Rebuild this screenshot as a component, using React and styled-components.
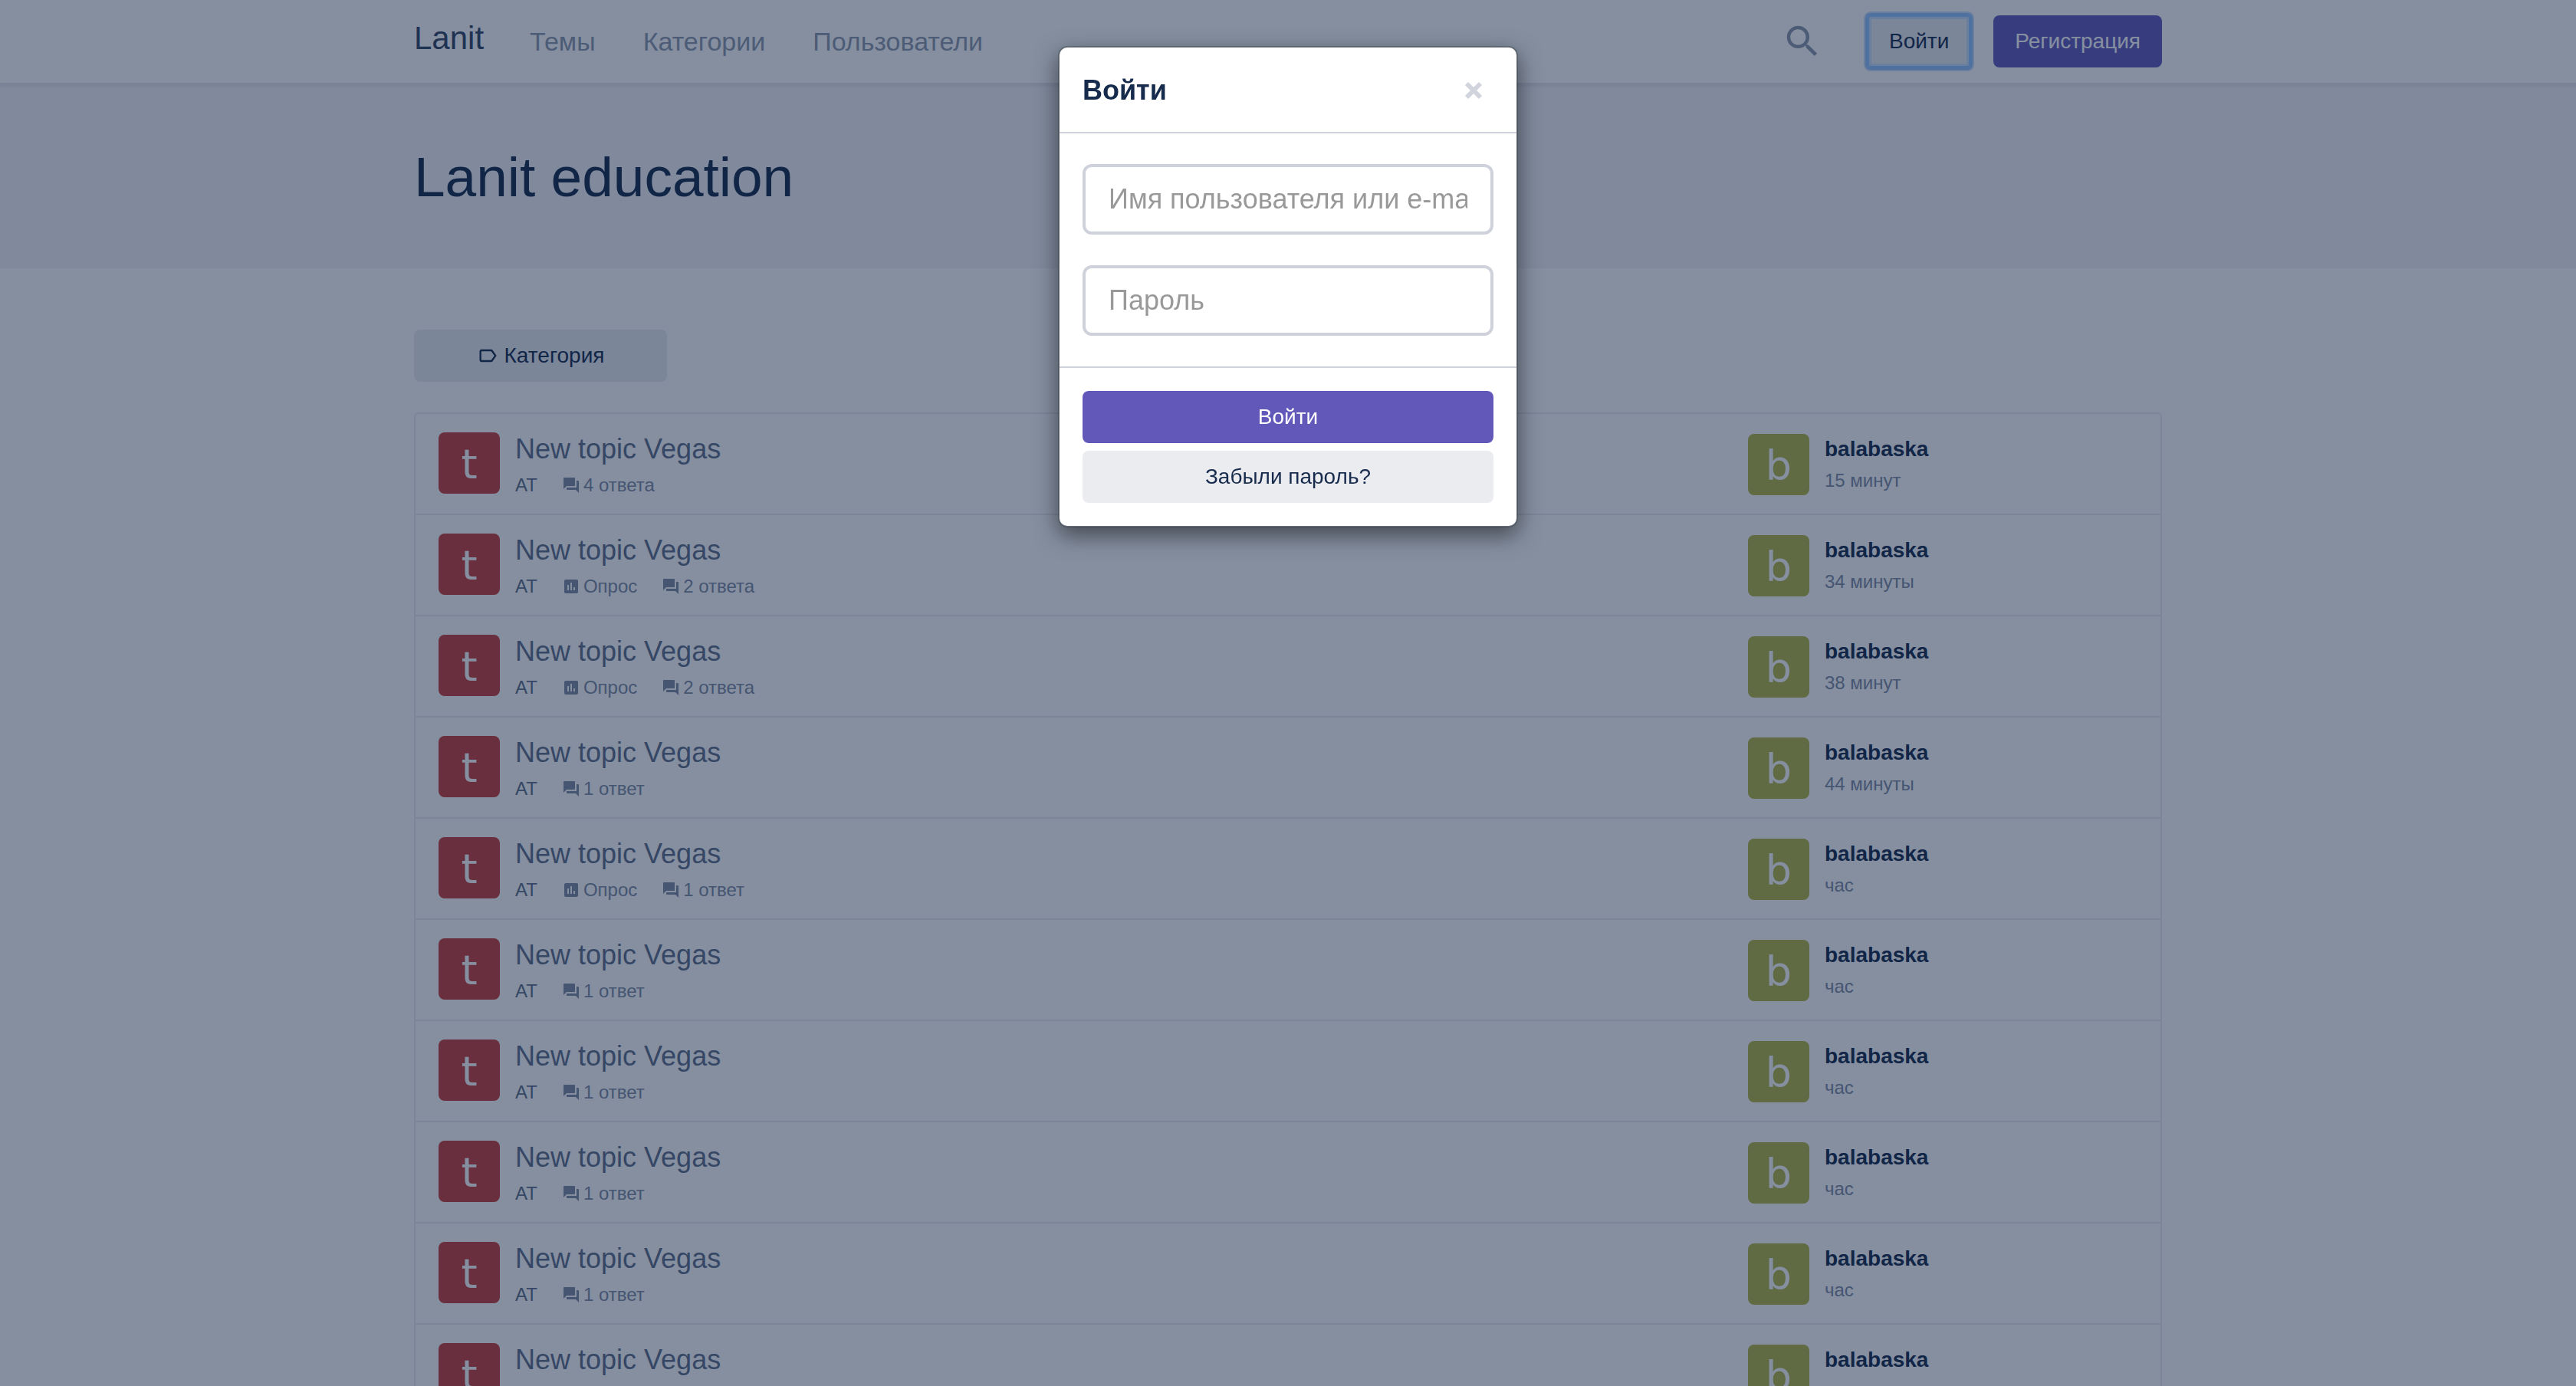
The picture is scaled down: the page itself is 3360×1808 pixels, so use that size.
import React from "react";
import styled, { createGlobalStyle, css } from "styled-components";
import { MdSearch, MdLabelOutline, MdForum, MdPoll } from "react-icons/md";

const GlobalStyle = createGlobalStyle`
  *, *::before, *::after { box-sizing: border-box; }
  body {
    margin: 0;
    overflow: hidden;
    background: #fff;
    color: #172b4d;
    font-family: "Liberation Sans", Helvetica, Arial, sans-serif;
    font-size: 28px;
    line-height: 40px;
  }
  #root { height: 100vh; overflow: hidden; }
  button, input { font: inherit; }
  a { color: inherit; text-decoration: none; }
`;

const Container = styled.div`
  max-width: 2280px;
  margin: 0 auto;
`;

const Navbar = styled.header`
  position: relative;
  background: #fff;
  box-shadow: 0 2px 0 #e6e8ec, 0 4px 4px rgba(9, 30, 66, 0.08);
`;

const NavInner = styled(Container)`
  display: flex;
  align-items: center;
  height: 108px;
`;

const Brand = styled.a`
  margin-right: 60px;
  padding-bottom: 8px;
  font-size: 42px;
  line-height: 52px;
  color: #344563;
`;

const NavLinks = styled.nav`
  display: flex;
  gap: 62px;
  flex: 1;
`;

const NavLink = styled.a`
  font-size: 34px;
  line-height: 48px;
  color: #8f98aa;
`;

const SearchButton = styled.button`
  display: flex;
  margin-right: 58px;
  padding: 0;
  border: 0;
  background: none;
  color: #8f98aa;
  font-size: 54px;
`;

const variants = {
  primary: css`
    background: #6258ba;
    color: #fff;
  `,
  muted: css`
    background: #ebecf0;
    color: #172b4d;
  `,
};

const Button = styled.button`
  display: flex;
  align-items: center;
  justify-content: center;
  gap: 8px;
  width: ${(p) => (p.$block ? "100%" : "auto")};
  height: 68px;
  padding: 0 28px;
  border: 0;
  border-radius: 8px;
  white-space: nowrap;
  ${(p) => variants[p.$variant]}
  ${(p) =>
    p.$focused &&
    css`
      border-radius: 4px;
      box-shadow: 0 0 0 3px #93c2ff, 0 0 0 5px #c9dcf8,
        inset 0 0 0 2px #93c2ff, inset 0 0 0 5px #c9dcf8;
    `}
`;

const NavActions = styled.div`
  display: flex;
  gap: 30px;
`;

const Hero = styled.section`
  padding: 86px 0 82px;
  background: #f5f4f7;
`;

const HeroTitle = styled.h1`
  margin: 0;
  font-size: 73px;
  line-height: 74px;
  font-weight: 400;
`;

const Main = styled(Container)`
  padding-top: 80px;
`;

const Filter = styled.div`
  width: 330px;
  margin-bottom: 40px;
`;

const TopicList = styled.ul`
  margin: 0;
  padding: 0;
  list-style: none;
  border: 2px solid #ebecf0;
  border-radius: 6px;
`;

const TopicRow = styled.li`
  display: flex;
  align-items: flex-start;
  height: 132px;
  padding: 24px 30px;
  border-bottom: 2px solid #ebecf0;
`;

const Avatar = styled.span`
  display: flex;
  align-items: center;
  justify-content: center;
  flex: none;
  width: 80px;
  height: 80px;
  margin-right: 20px;
  padding-top: 4px;
  border-radius: 8px;
  background: ${(p) => p.$color};
  color: #fff;
  font-family: "DejaVu Sans", sans-serif;
  font-size: 54px;
  line-height: 76px;
`;

const Topic = styled.div`
  flex: 1;
  padding-top: 2px;
`;

const TopicTitle = styled.a`
  display: block;
  color: #616e88;
  font-size: 36px;
  line-height: 40px;
`;

const Meta = styled.div`
  display: flex;
  gap: 32px;
  margin-top: 10px;
  color: #808aa0;
  font-size: 24px;
  line-height: 34px;
`;

const MetaItem = styled.span`
  display: flex;
  align-items: center;
  gap: 4px;
  svg { font-size: 24px; }
`;

const Category = styled.a`
  color: #616e88;
`;

const LastPost = styled.div`
  display: flex;
  width: 508px;
  padding-top: 2px;
`;

const Poster = styled.a`
  display: block;
  font-weight: 700;
`;

const Time = styled.a`
  display: block;
  color: #808aa0;
  font-size: 24px;
  line-height: 42px;
`;

const Backdrop = styled.div`
  position: fixed;
  inset: 0;
  padding-top: 60px;
  background: rgba(12, 32, 66, 0.5);
`;

const Dialog = styled.form`
  width: 600px;
  margin: 0 auto;
  border: 2px solid rgba(0, 0, 0, 0.2);
  border-radius: 12px;
  background: #fff;
  background-clip: padding-box;
  box-shadow: 0 10px 30px rgba(0, 0, 0, 0.5);
`;

const DialogHeader = styled.div`
  display: flex;
  align-items: center;
  justify-content: space-between;
  height: 112px;
  padding: 2px 44px 0 30px;
  border-bottom: 2px solid #cfd1db;
`;

const DialogTitle = styled.h2`
  margin: 0;
  font-size: 36px;
  line-height: 50px;
  font-weight: 700;
`;

const CloseButton = styled.button`
  display: flex;
  padding: 0;
  border: 0;
  background: none;
  color: #d2d4dd;
`;

const DialogBody = styled.div`
  display: grid;
  gap: 40px;
  padding: 40px 30px;
`;

const Field = styled.input`
  width: 100%;
  height: 92px;
  padding: 0 30px;
  border: 4px solid #cfd1db;
  border-radius: 12px;
  background: #fff;
  color: #172b4d;
  font-size: 36px;
  &::placeholder { color: #999; opacity: 1; }
`;

const DialogFooter = styled.div`
  display: grid;
  gap: 10px;
  padding: 30px;
  border-top: 2px solid #cfd1db;
`;

const topics = [
  { poll: false, replies: "4 ответа", time: "15 минут" },
  { poll: true, replies: "2 ответа", time: "34 минуты" },
  { poll: true, replies: "2 ответа", time: "38 минут" },
  { poll: false, replies: "1 ответ", time: "44 минуты" },
  { poll: true, replies: "1 ответ", time: "час" },
  { poll: false, replies: "1 ответ", time: "час" },
  { poll: false, replies: "1 ответ", time: "час" },
  { poll: false, replies: "1 ответ", time: "час" },
  { poll: false, replies: "1 ответ", time: "час" },
  { poll: false, replies: "1 ответ", time: "час" },
];

function TopicItem({ topic }) {
  return (
    <TopicRow>
      <Avatar $color="#c83f3a">t</Avatar>
      <Topic>
        <TopicTitle href="#topic">New topic Vegas</TopicTitle>
        <Meta>
          <Category href="#category">AT</Category>
          {topic.poll && (
            <MetaItem>
              <MdPoll />
              Опрос
            </MetaItem>
          )}
          <MetaItem>
            <MdForum />
            {topic.replies}
          </MetaItem>
        </Meta>
      </Topic>
      <LastPost>
        <Avatar $color="#b5b444">b</Avatar>
        <div>
          <Poster href="#user">balabaska</Poster>
          <Time href="#post">{topic.time}</Time>
        </div>
      </LastPost>
    </TopicRow>
  );
}

function LoginDialog() {
  return (
    <Backdrop>
      <Dialog role="dialog" aria-labelledby="login-title" onSubmit={(e) => e.preventDefault()}>
        <DialogHeader>
          <DialogTitle id="login-title">Войти</DialogTitle>
          <CloseButton type="button" aria-label="Закрыть">
            <svg width="24" height="24" viewBox="0 0 24 24" fill="none" stroke="currentColor" strokeWidth="6">
              <path d="M3 3 21 21M21 3 3 21" />
            </svg>
          </CloseButton>
        </DialogHeader>
        <DialogBody>
          <Field type="text" aria-label="Имя пользователя или e-mail" placeholder="Имя пользователя или e-mail" />
          <Field type="password" aria-label="Пароль" placeholder="Пароль" />
        </DialogBody>
        <DialogFooter>
          <Button type="submit" $variant="primary" $block>Войти</Button>
          <Button type="button" $variant="muted" $block>Забыли пароль?</Button>
        </DialogFooter>
      </Dialog>
    </Backdrop>
  );
}

export default function App() {
  return (
    <>
      <GlobalStyle />
      <Navbar>
        <NavInner>
          <Brand href="#home">Lanit</Brand>
          <NavLinks>
            <NavLink href="#threads">Темы</NavLink>
            <NavLink href="#categories">Категории</NavLink>
            <NavLink href="#users">Пользователи</NavLink>
          </NavLinks>
          <SearchButton type="button" aria-label="Поиск"><MdSearch /></SearchButton>
          <NavActions>
            <Button type="button" $variant="muted" $focused>Войти</Button>
            <Button type="button" $variant="primary">Регистрация</Button>
          </NavActions>
        </NavInner>
      </Navbar>
      <Hero>
        <Container>
          <HeroTitle>Lanit education</HeroTitle>
        </Container>
      </Hero>
      <Main as="main">
        <Filter>
          <Button type="button" $variant="muted" $block>
            <MdLabelOutline />
            Категория
          </Button>
        </Filter>
        <TopicList>
          {topics.map((topic, i) => (
            <TopicItem key={i} topic={topic} />
          ))}
        </TopicList>
      </Main>
      <LoginDialog />
    </>
  );
}
